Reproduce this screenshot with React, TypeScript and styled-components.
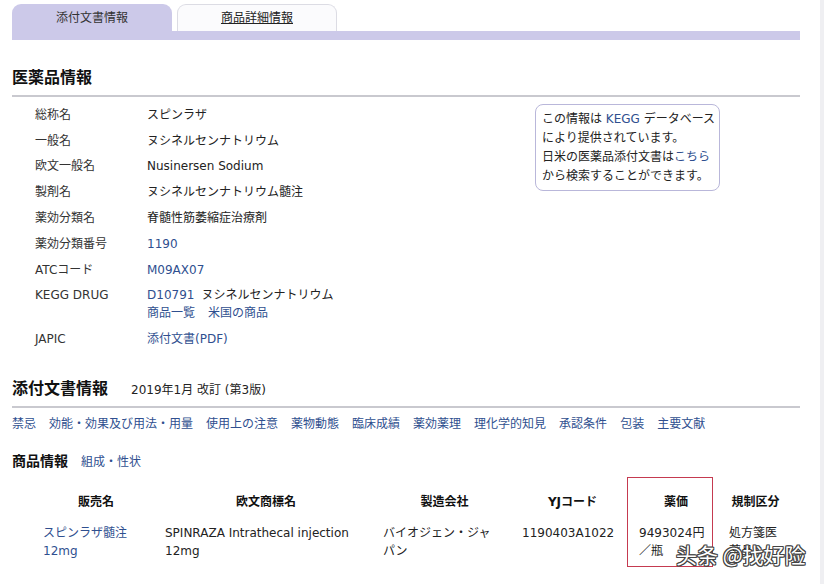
import React from "react";
import styled, { createGlobalStyle } from "styled-components";

const GlobalStyle = createGlobalStyle`
  html, body { margin: 0; padding: 0; background: #fff; }
  body {
    font-family: "DejaVu Sans", "Noto Sans CJK JP", sans-serif;
    font-size: 12px;
    color: #222;
  }
`;

const LINK = "#2f4f8f";
const LAVENDER = "#ccc9e9";

const Shell = styled.div`
  display: flex;
  min-height: 584px;
`;

const Page = styled.div`
  flex: 1;
  padding: 4px 20px 0 12px;
  overflow: hidden;
`;

const Gutter = styled.div`
  width: 4px;
  background: #efeff2;
`;

const TabBar = styled.div`
  display: flex;
  gap: 5px;
  border-bottom: 9px solid ${LAVENDER};
`;

const Tab = styled.div<{ $active?: boolean }>`
  width: 160px;
  height: 27px;
  box-sizing: border-box;
  display: flex;
  align-items: center;
  justify-content: center;
  border-radius: 9px 9px 0 0;
  background: ${(p) => (p.$active ? LAVENDER : "#fbfbfd")};
  border: ${(p) => (p.$active ? "none" : "1px solid #dcdce4")};
  border-bottom: none;
  color: ${(p) => (p.$active ? "#333" : "#222")};
  text-decoration: ${(p) => (p.$active ? "none" : "underline")};
  font-size: 12px;
  line-height: 18px;
`;

const SectionHeading = styled.div<{ $top: number }>`
  margin-top: ${(p) => p.$top}px;
  padding-bottom: 7px;
  border-bottom: 2px solid #c9c9cf;
  display: flex;
  align-items: baseline;
  gap: 23px;
`;

const HeadingText = styled.h2`
  margin: 0;
  font-size: 16px;
  line-height: 20px;
  font-weight: bold;
  color: #111;
`;

const HeadingNote = styled.span`
  font-size: 12px;
  color: #222;
`;

const InfoRow = styled.div`
  display: flex;
  align-items: flex-start;
`;

const DefList = styled.div`
  flex: 0 0 523px;
  box-sizing: border-box;
  padding-left: 23px;
  margin-top: 5px;
`;

const DefRow = styled.div`
  display: grid;
  grid-template-columns: 112px 1fr;
  padding: 3.9px 0;
  line-height: 18px;
`;

const Label = styled.div`
  color: #333;
`;

const Value = styled.div``;

const Link = styled.a`
  color: ${LINK};
  text-decoration: none;
`;

const LinkGroup = styled.div<{ $gap: number }>`
  display: flex;
  gap: ${(p) => p.$gap}px;
`;

const InfoBox = styled.div`
  margin-top: 7px;
  width: 185px;
  box-sizing: border-box;
  border: 1.5px solid #b9b7da;
  border-radius: 8px;
  padding: 5px 6px 4px;
  line-height: 19px;
  white-space: nowrap;
`;

const BoxLine = styled.div``;

const NavLinks = styled.nav`
  margin-top: 7px;
  display: flex;
  flex-wrap: wrap;
  gap: 13px;
  line-height: 18px;
`;

const SubHeading = styled.div`
  margin-top: 18px;
  display: flex;
  align-items: baseline;
  gap: 13px;
  line-height: 20px;
`;

const SubHeadingText = styled.h3`
  margin: 0;
  font-size: 14px;
  font-weight: bold;
  color: #111;
`;

const ProductTable = styled.div`
  position: relative;
  margin-top: 5px;
  padding: 13px 0 0 23px;
  display: grid;
  grid-template-columns: 122px 218px 139px 117px 90px 69px;
  row-gap: 10px;
  line-height: 18px;
`;

const HeadCell = styled.div`
  padding: 3px 8px;
  text-align: center;
  font-weight: bold;
  color: #111;
`;

const Cell = styled.div<{ $padRight?: number }>`
  padding: 0 ${(p) => p.$padRight ?? 8}px 0 8px;
`;

const CellLink = styled.a`
  color: ${LINK};
  text-decoration: none;
`;

const HighlightBox = styled.div`
  position: absolute;
  left: 615px;
  top: 0;
  width: 86px;
  height: 90px;
  box-sizing: border-box;
  border: 1.5px solid #c53a50;
  pointer-events: none;
`;

const Watermark = styled.div`
  position: absolute;
  left: 664px;
  top: 63px;
  font-family: "Noto Sans CJK SC", sans-serif;
  font-size: 21px;
  line-height: 28px;
  color: #fff;
  white-space: nowrap;
  text-shadow: 1px 0 0 #444, -1px 0 0 #444, 0 1px 0 #444, 0 -1px 0 #444,
    1px 1px 0 #444, -1px -1px 0 #444, 1px -1px 0 #444, -1px 1px 0 #444;
`;

const defs: { label: string; value: React.ReactNode }[] = [
  { label: "総称名", value: "スピンラザ" },
  { label: "一般名", value: "ヌシネルセンナトリウム" },
  { label: "欧文一般名", value: "Nusinersen Sodium" },
  { label: "製剤名", value: "ヌシネルセンナトリウム髄注" },
  { label: "薬効分類名", value: "脊髄性筋萎縮症治療剤" },
  { label: "薬効分類番号", value: <Link href="#">1190</Link> },
  { label: "ATCコード", value: <Link href="#">M09AX07</Link> },
  {
    label: "KEGG DRUG",
    value: (
      <>
        <LinkGroup $gap={7}>
          <Link href="#">D10791</Link>
          <span>ヌシネルセンナトリウム</span>
        </LinkGroup>
        <LinkGroup $gap={13}>
          <Link href="#">商品一覧</Link>
          <Link href="#">米国の商品</Link>
        </LinkGroup>
      </>
    ),
  },
  { label: "JAPIC", value: <Link href="#">添付文書(PDF)</Link> },
];

const navItems = [
  "禁忌",
  "効能・効果及び用法・用量",
  "使用上の注意",
  "薬物動態",
  "臨床成績",
  "薬効薬理",
  "理化学的知見",
  "承認条件",
  "包装",
  "主要文献",
];

const headers = ["販売名", "欧文商標名", "製造会社", "YJコード", "薬価", "規制区分"];

export default function App() {
  return (
    <>
      <GlobalStyle />
      <Shell>
        <Page>
          <TabBar>
            <Tab $active>添付文書情報</Tab>
            <Tab>商品詳細情報</Tab>
          </TabBar>

          <SectionHeading $top={28}>
            <HeadingText>医薬品情報</HeadingText>
          </SectionHeading>

          <InfoRow>
            <DefList>
              {defs.map((d) => (
                <DefRow key={d.label}>
                  <Label>{d.label}</Label>
                  <Value>{d.value}</Value>
                </DefRow>
              ))}
            </DefList>
            <InfoBox>
              <BoxLine>
                この情報は <Link href="#">KEGG</Link> データベース
              </BoxLine>
              <BoxLine>により提供されています。</BoxLine>
              <BoxLine>
                日米の医薬品添付文書は<Link href="#">こちら</Link>
              </BoxLine>
              <BoxLine>から検索することができます。</BoxLine>
            </InfoBox>
          </InfoRow>

          <SectionHeading $top={27}>
            <HeadingText>添付文書情報</HeadingText>
            <HeadingNote>2019年1月 改訂 (第3版)</HeadingNote>
          </SectionHeading>

          <NavLinks>
            {navItems.map((n) => (
              <Link key={n} href="#">
                {n}
              </Link>
            ))}
          </NavLinks>

          <SubHeading>
            <SubHeadingText>商品情報</SubHeadingText>
            <Link href="#">組成・性状</Link>
          </SubHeading>

          <ProductTable>
            {headers.map((h) => (
              <HeadCell key={h}>{h}</HeadCell>
            ))}
            <Cell>
              <CellLink href="#">スピンラザ髄注12mg</CellLink>
            </Cell>
            <Cell>SPINRAZA Intrathecal injection 12mg</Cell>
            <Cell $padRight={16}>バイオジェン・ジャパン</Cell>
            <Cell>1190403A1022</Cell>
            <Cell $padRight={12}>9493024円／瓶</Cell>
            <Cell>処方箋医薬品</Cell>
            <HighlightBox />
            <Watermark>头条 @找好险</Watermark>
          </ProductTable>
        </Page>
        <Gutter />
      </Shell>
    </>
  );
}
